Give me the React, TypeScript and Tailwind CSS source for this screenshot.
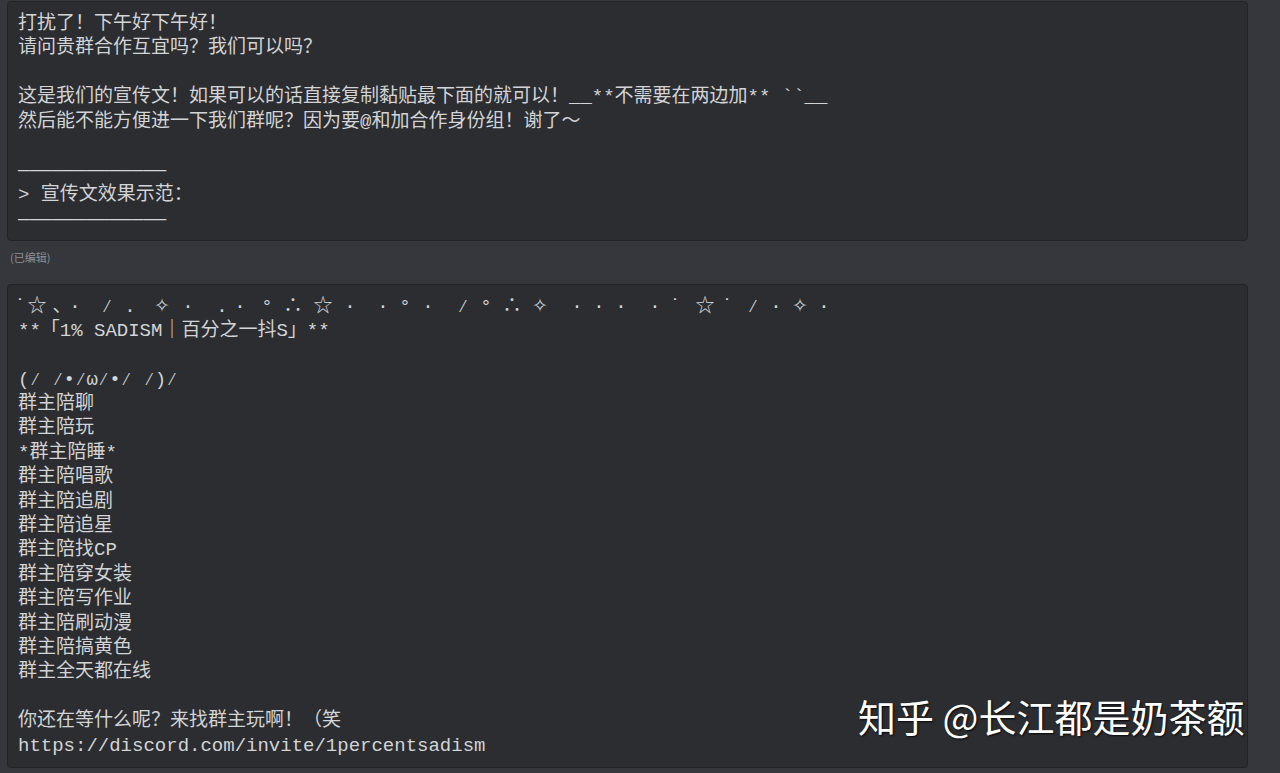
const mono = "font-['Liberation_Mono','Noto_Sans_CJK_SC','DejaVu_Sans',monospace]";

const sparkles: [string, number][] = [
  ["˙", 20], ["☆", 37], ["、", 62], ["·", 75], ["⁄", 107], [".", 130], ["✧", 162], ["·", 188],
  [".", 222], ["·", 240], ["°", 267], ["∴", 293], ["☆", 323], ["·", 350], ["·", 383], ["°", 405],
  ["·", 428], ["⁄", 463], ["°", 486], ["∴", 512], ["✧", 540], ["·", 577], ["·", 599], ["·", 621],
  ["·", 655], ["˙", 675], ["☆", 705], ["˙", 727], ["⁄", 753], ["·", 776], ["✧", 800], ["·", 824],
];

const intro = [
  "打扰了！下午好下午好！",
  "请问贵群合作互宜吗？我们可以吗？",
  "",
  "这是我们的宣传文！如果可以的话直接复制黏贴最下面的就可以！__**不需要在两边加** ``__",
  "然后能不能方便进一下我们群呢？因为要@和加合作身份组！谢了～",
  "",
  "—————————————",
  "> 宣传文效果示范：",
  "—————————————",
];

const promo = [
  "**「1% SADISM｜百分之一抖S」**",
  "",
  "(⁄ ⁄•⁄ω⁄•⁄ ⁄)⁄",
  "群主陪聊",
  "群主陪玩",
  "*群主陪睡*",
  "群主陪唱歌",
  "群主陪追剧",
  "群主陪追星",
  "群主陪找CP",
  "群主陪穿女装",
  "群主陪写作业",
  "群主陪刷动漫",
  "群主陪搞黄色",
  "群主全天都在线",
  "",
  "你还在等什么呢？来找群主玩啊！（笑",
  "https://discord.com/invite/1percentsadism",
];

function Line({ text }: { text: string }) {
  return <div className="h-[24.4px] whitespace-pre leading-[24.4px]">{text}</div>;
}

// sparkle glyphs sit at fixed centres, so each gets a 20px cell
function SparkleRow() {
  return (
    <div className="flex h-[24.4px] items-center leading-[24.4px]">
      {sparkles.map(([ch, cx], i) => {
        const prevRight = i === 0 ? 18 : sparkles[i - 1][1] + 10;
        return (
          <span
            key={i}
            className="inline-block w-[20px] shrink-0 text-center"
            style={{ marginLeft: cx - 10 - prevRight }}
          >
            {ch}
          </span>
        );
      })}
    </div>
  );
}

export default function App() {
  return (
    <div className="relative h-[773px] w-[1280px] overflow-hidden bg-[#36373c]">
      <div className={`${mono} text-[19px] text-[#d3d4d6]`}>
        <div className="ml-[7px] mr-[32px] mt-px rounded-[4px] border border-[#222327] bg-[#2b2d31] pb-[8px] pl-[10px] pt-[10px]">
          {intro.map((t, i) => (
            <Line key={i} text={t} />
          ))}
        </div>
      </div>

      <div className="h-[43px] pl-[10px] pt-[9px] font-['Noto_Sans_CJK_SC',sans-serif] text-[11px] leading-[14px] text-[#8c8f95]">
        (已编辑)
      </div>

      <div className={`${mono} text-[19px] text-[#d3d4d6]`}>
        <div className="ml-[7px] mr-[32px] rounded-[4px] border border-[#222327] bg-[#2b2d31] pb-[9px] pl-[10px] pt-[10px]">
          <SparkleRow />
          {promo.map((t, i) => (
            <Line key={i} text={t} />
          ))}
        </div>
      </div>

      <div className="absolute left-[858px] top-[690px] whitespace-pre font-['Noto_Sans_CJK_SC',sans-serif] text-[38px] leading-[52px] text-white [text-shadow:1px_1px_2px_rgba(0,0,0,0.85)]">
        知乎 @长江都是奶茶额
      </div>
    </div>
  );
}
